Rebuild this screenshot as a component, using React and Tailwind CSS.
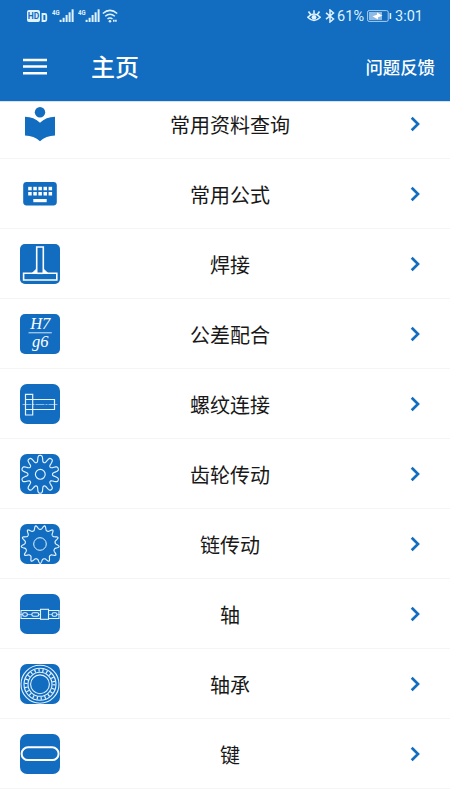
import React from 'react';

const BLUE = '#126cc0';

// Closed outline of a toothed wheel, sampled around the centre of a 40x40 tile
const toothedPath = (teeth, radiusAt, offset = 0) => {
  const steps = teeth * 24;
  const points = [];
  for (let i = 0; i < steps; i += 1) {
    const angle = (i / steps) * Math.PI * 2;
    const r = radiusAt(Math.cos(teeth * (angle - offset)));
    const x = 20.2 + r * Math.sin(angle);
    const y = 20.3 - r * Math.cos(angle);
    points.push(`${x.toFixed(2)} ${y.toFixed(2)}`);
  }
  return `M${points.join('L')}Z`;
};

const gearPath = toothedPath(10, (c) => 15.6 + 3.5 * Math.tanh(1.8 * c));
const sprocketPath = toothedPath(13, (c) => 15 + 4 * Math.pow((c + 1) / 2, 1.8), Math.PI / 13);

const Tile = ({ radius = 7, children }) => (
  <svg viewBox="0 0 40 40" className="w-10 h-10" fill="none" stroke="#e4f4ff">
    <rect width="40" height="40" rx={radius} fill={BLUE} stroke="none" />
    {children}
  </svg>
);

const BookIcon = () => (
  <svg viewBox="0 0 40 40" className="w-10 h-10" fill={BLUE}>
    <circle cx="20" cy="8.2" r="5.2" />
    <path d="M5 12.8C11 13 16 14.9 20 18.7C24 14.9 29 13 35 12.8V31.5C29 31.8 24 33.5 20 37.2C16 33.5 11 31.8 5 31.5Z" />
  </svg>
);

const KeyboardIcon = () => (
  <svg viewBox="0 0 40 40" className="w-10 h-10">
    <rect x="3.2" y="8" width="33.6" height="23.4" rx="3.4" fill={BLUE} />
    <g fill="#fff">
      {[8.2, 13.3, 18.4, 23.5, 28.6].map((x) => (
        <React.Fragment key={x}>
          <rect x={x} y="12.8" width="3.5" height="3.5" />
          <rect x={x} y="18" width="3.5" height="3.5" />
        </React.Fragment>
      ))}
      <rect x="13.3" y="25" width="13.4" height="3.2" />
    </g>
  </svg>
);

const WeldIcon = () => (
  <Tile radius={5}>
    <path d="M16.7 3H23.3V29.3H36.8V36H3.6V29.3H16.7Z" stroke="#fff" strokeWidth="1.6" />
    <path d="M16.7 29.3H23.3" stroke="#fff" strokeWidth="1.6" />
    <path d="M16.5 25V29H12.3ZM23.5 25V29H27.7Z" fill="#fff" stroke="#fff" strokeWidth="0.8" />
  </Tile>
);

const ToleranceIcon = () => (
  <Tile radius={5}>
    <g fill="#fff" stroke="none" fontFamily="Liberation Serif, serif" fontStyle="italic" fontSize="16.5" textAnchor="middle">
      <text x="20.3" y="15.3">H7</text>
      <text x="20.3" y="32.5">g6</text>
    </g>
    <path d="M8.5 18.8H31.8" strokeWidth="0.9" />
  </Tile>
);

const BoltIcon = () => (
  <Tile>
    <path d="M5.5 10.3H12.7V31H5.5ZM5.5 15.5H12.7M5.5 25.5H12.7M12.7 15.5H34.5V25.5H12.7" strokeWidth="1.2" />
    <path d="M2.5 20.5H38" strokeWidth="0.6" strokeDasharray="9 1 2 1" />
  </Tile>
);

const GearIcon = () => (
  <Tile>
    <path d={gearPath} strokeWidth="1.15" />
    <circle cx="20.3" cy="20.3" r="4.9" strokeWidth="1.15" />
  </Tile>
);

const SprocketIcon = () => (
  <Tile>
    <path d={sprocketPath} strokeWidth="1.15" />
    <circle cx="20" cy="20" r="6.3" strokeWidth="1" />
  </Tile>
);

const ShaftIcon = () => (
  <Tile>
    <path d="M1 16.5H20.5V24.5H1ZM28.5 16.5H39V24.5H28.5Z" strokeWidth="1.1" />
    <path d="M0 20.5H40" strokeWidth="0.6" />
    <rect x="2.6" y="18.8" width="4.8" height="3.4" rx="1.7" fill={BLUE} strokeWidth="1.1" />
    <rect x="11.8" y="18.8" width="7" height="3.4" rx="1.7" fill={BLUE} strokeWidth="1.1" />
    <rect x="32" y="18.8" width="5" height="3.4" rx="1.7" fill={BLUE} strokeWidth="1.1" />
    <rect x="20.5" y="15.3" width="8" height="10" fill={BLUE} strokeWidth="1.1" />
  </Tile>
);

const BearingIcon = () => (
  <Tile>
    <circle cx="20" cy="20.3" r="19" strokeWidth="1.1" />
    <circle cx="20" cy="20.3" r="16" strokeWidth="1.1" />
    <circle cx="20" cy="20.3" r="14" strokeWidth="3" strokeDasharray="1.2 2.8" />
    <circle cx="20" cy="20.3" r="12" strokeWidth="1.1" />
    <circle cx="20" cy="20.3" r="9.4" strokeWidth="1.1" />
  </Tile>
);

const KeyIcon = () => (
  <Tile>
    <rect x="1.6" y="13.3" width="37" height="12.8" rx="6.4" stroke="#fff" strokeWidth="2" />
  </Tile>
);

const menuItems = [
  { label: '常用资料查询', Icon: BookIcon },
  { label: '常用公式', Icon: KeyboardIcon },
  { label: '焊接', Icon: WeldIcon },
  { label: '公差配合', Icon: ToleranceIcon },
  { label: '螺纹连接', Icon: BoltIcon },
  { label: '齿轮传动', Icon: GearIcon },
  { label: '链传动', Icon: SprocketIcon },
  { label: '轴', Icon: ShaftIcon },
  { label: '轴承', Icon: BearingIcon },
  { label: '键', Icon: KeyIcon },
];

const MenuRow = ({ label, Icon }) => (
  <li className="h-[70px] shrink-0 flex items-center pl-5 pr-[19px] border-b border-[#f5f5f5]">
    <Icon />
    <span className="flex-1 text-center text-[20px] leading-7 text-[#181818] pt-1 pl-px">{label}</span>
    <svg viewBox="0 0 32 16" className="w-8 h-4" fill="none" stroke={BLUE} strokeWidth="2.7">
      <path d="M12.7 1.8L19 8L12.7 14.2" />
    </svg>
  </li>
);

const SignalIcon = () => (
  <svg viewBox="0 0 22 14" className="w-[22px] h-3.5" fill="currentColor">
    <text x="0" y="5.6" fontSize="6.6" fontWeight="700" fontFamily="Roboto, sans-serif" textLength="7.6" lengthAdjust="spacingAndGlyphs">4G</text>
    <rect x="7.6" y="10.8" width="2" height="2.2" />
    <rect x="10.6" y="8.8" width="2" height="4.2" />
    <rect x="13.6" y="6" width="2" height="7" />
    <rect x="16.6" y="3.3" width="2" height="9.7" />
    <rect x="19.6" y="0.3" width="2" height="12.7" />
  </svg>
);

const StatusBar = () => (
  <div className="h-8 pl-[27px] pr-[27px] flex items-center justify-between text-[#dff2ff]">
    <div className="flex items-center">
      <svg viewBox="0 0 21 14" className="w-[21px] h-3.5 mr-1">
        <rect x="0" y="1" width="13" height="12" rx="2" fill="currentColor" />
        <text x="6.5" y="10.2" textAnchor="middle" fontSize="8.5" fontWeight="700" fontFamily="Roboto, sans-serif" fill={BLUE}>HD</text>
        <path d="M15.5 5H18Q19.3 5 19.3 6.5V10.5Q19.3 12 18 12H15.5Z" fill="none" stroke="currentColor" strokeWidth="1.8" />
      </svg>
      <SignalIcon />
      <div className="w-1" />
      <SignalIcon />
      <svg viewBox="0 0 16 14" className="w-4 h-3.5 ml-0.5" fill="none" stroke="currentColor" strokeWidth="1.5">
        <path d="M0.8 4.5Q8 -1.8 15.2 4.5M3.2 7.3Q8 3.2 12.8 7.3M5.5 10Q8 7.9 10.5 10" />
        <circle cx="8" cy="12.2" r="1.3" fill="currentColor" stroke="none" />
        <path d="M11 11.8H15" strokeWidth="2" strokeDasharray="1.6 0.5" />
      </svg>
    </div>
    <div className="flex items-center font-['Roboto',sans-serif] text-[14.5px] leading-none">
      <svg viewBox="0 0 14 14" className="w-3.5 h-3.5" fill="none" stroke="currentColor" strokeWidth="1.6">
        <path d="M0.8 8.3Q7 1.8 13.2 8.3Q7 14.8 0.8 8.3ZM7 4.2V1.2M3.5 5.2L1.5 2.6M10.5 5.2L12.5 2.6" />
        <circle cx="7" cy="8.3" r="2.4" fill="currentColor" stroke="none" />
      </svg>
      <svg viewBox="0 0 10 14" className="w-2.5 h-3.5 ml-1" fill="none" stroke="currentColor" strokeWidth="1.5">
        <path d="M1 3.8L8.5 10L5 13V1L8.5 4L1 10.2" />
      </svg>
      <span className="ml-0.5 pt-0.5">61%</span>
      <svg viewBox="0 0 25 12" className="w-[25px] h-3 ml-[3px]">
        <rect x="0.6" y="0.6" width="20.6" height="10.8" rx="1.5" fill="none" stroke="#a9d0f0" strokeWidth="1" />
        <rect x="2" y="2" width="13" height="8" fill="#8dbbe6" />
        <path d="M5.5 6.3L10 4.8V2.6L15.5 5.8L11 7.2V9.4Z" fill="#fff" />
        <rect x="22.6" y="3" width="1.6" height="6" rx="0.6" fill="currentColor" />
      </svg>
      <span className="ml-[3px] pt-0.5">3:01</span>
    </div>
  </div>
);

const App = () => (
  <div className="w-[450px] h-[800px] flex flex-col overflow-hidden bg-white font-['Roboto','Noto_Sans_CJK_SC',sans-serif]">
    <header className="h-[101px] shrink-0 bg-[#126cc0] text-white">
      <StatusBar />
      <div className="h-[69px] flex items-center pl-[23px] pr-[15px]">
        <svg viewBox="0 0 24 18" className="w-6 h-[18px]" stroke="#fff" strokeWidth="2.5">
          <path d="M0 2H24M0 8.5H24M0 15.2H24" />
        </svg>
        <h1 className="ml-11 flex-1 text-[24px] leading-8 font-medium pt-0.5">主页</h1>
        <span className="text-[17.4px] leading-6 font-medium pt-0.5">问题反馈</span>
      </div>
    </header>
    <main className="flex-1 min-h-0 overflow-hidden border-t border-[#d5e3f1]">
      <ul className="-mt-[13px] flex flex-col">
        {menuItems.map((item) => (
          <MenuRow key={item.label} {...item} />
        ))}
      </ul>
    </main>
  </div>
);

export default App;
